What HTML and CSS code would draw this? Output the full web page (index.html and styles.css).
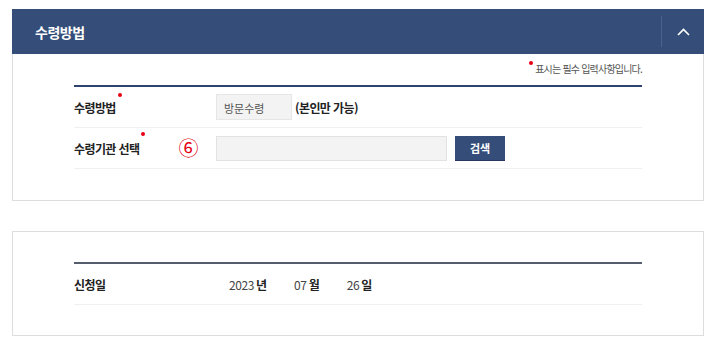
FILE: index.html
```html
<!DOCTYPE html>
<html lang="ko">
  <head>
    <meta charset="UTF-8" />
    <meta name="viewport" content="width=device-width, initial-scale=1.0" />
    <title>수령방법</title>
    <link rel="stylesheet" href="styles.css">
  </head>
  <body>
    <div class="section">
      <div class="section-head">
        <h2 class="section-title">수령방법</h2>
        <button class="toggle" type="button">
          <svg width="13" height="8" viewBox="0 0 13 8">
            <polyline points="1,7 6.5,1.5 12,7" fill="none" stroke="#fff" stroke-width="1.6" />
          </svg>
        </button>
      </div>
      <div class="section-body">
        <p class="req-note"><span class="dot"></span> 표시는 필수 입력사항입니다.</p>
        <div class="form-table">
          <div class="row">
            <div class="label">수령방법<span class="dot"></span></div>
            <div class="value">
              <span class="readonly">방문수령</span>
              <strong class="hint">(본인만 가능)</strong>
            </div>
          </div>
          <div class="row">
            <div class="label">수령기관 선택<span class="dot"></span><span class="marker">⑥</span></div>
            <div class="value">
              <input class="text-input" type="text" />
              <button class="btn-search" type="button">검색</button>
            </div>
          </div>
        </div>
      </div>
    </div>

    <div class="section section-plain">
      <div class="section-body">
        <div class="form-table form-table-gray">
          <div class="row">
            <div class="label">신청일</div>
            <div class="value date">
              <span class="num">2023</span><b>년</b>
              <span class="num">07</span><b>월</b>
              <span class="num">26</span><b>일</b>
            </div>
          </div>
        </div>
      </div>
    </div>
  </body>
</html>
```

FILE: styles.css
```css
* {
  box-sizing: border-box;
  margin: 0;
  padding: 0;
  font-family: "Noto Sans CJK KR", "Noto Sans", sans-serif;
}

body {
  background: #fff;
  color: #333;
  padding: 9px 17px 0 12px;
}

.section {
  width: 692px;
}

.section-head {
  display: flex;
  align-items: center;
  height: 45px;
  background-color: #344e79;
  padding-left: 23px;
}

.section-title {
  flex: 1;
  color: #fff;
  font-size: 14px;
  font-weight: 700;
  letter-spacing: -0.5px;
}

.toggle {
  width: 43px;
  height: 31px;
  border: none;
  border-left: 1px solid #4a6190;
  background: transparent;
  display: flex;
  align-items: center;
  justify-content: center;
}

.section-body {
  border: 1px solid #ddd;
  border-top: none;
  padding: 8px 61px 31px 61px;
}

.section-plain {
  margin-top: 30px;
}

.section-plain .section-body {
  border-top: 1px solid #ddd;
  padding-top: 30px;
  padding-bottom: 30px;
}

.req-note {
  text-align: right;
  font-size: 10px;
  line-height: 14px;
  color: #555;
  letter-spacing: -0.8px;
  margin-bottom: 9px;
}

.dot {
  display: inline-block;
  width: 4px;
  height: 4px;
  border-radius: 50%;
  background: #e60012;
  vertical-align: top;
  position: relative;
  top: -1px;
}

.form-table {
  border-top: 2px solid #2e4370;
}

.form-table-gray {
  border-top-color: #535d6c;
}

.row {
  display: flex;
  align-items: center;
  height: 41px;
  border-bottom: 1px solid #f0f0f0;
}

.label {
  width: 142px;
  display: flex;
  align-items: center;
  font-size: 12px;
  font-weight: 700;
  color: #222;
  letter-spacing: -0.6px;
}

.label .dot {
  align-self: flex-start;
  margin-left: 2px;
  top: -6px;
}

.marker {
  margin-left: auto;
  margin-right: 18px;
  color: #e60012;
  font-size: 20px;
  font-weight: 400;
  line-height: 1;
}

.value {
  display: flex;
  align-items: center;
  flex: 1;
}

.readonly {
  display: inline-block;
  width: 76px;
  height: 26px;
  line-height: 26px;
  padding-left: 7px;
  background: #f3f3f3;
  border: 1px solid #e6e6e6;
  font-size: 11px;
  color: #555;
}

.hint {
  margin-left: 3px;
  font-size: 12px;
  color: #222;
  letter-spacing: -0.6px;
}

.text-input {
  width: 231px;
  height: 25px;
  background: #f3f3f3;
  border: 1px solid #e2e2e2;
}

.btn-search {
  width: 50px;
  height: 25px;
  margin-left: 8px;
  background: #344e79;
  color: #fff;
  border: none;
  border-bottom: 1px solid #26395c;
  font-size: 11px;
  font-weight: 700;
}

.date {
  padding-left: 13px;
  font-size: 12px;
  color: #444;
}

.date .num {
  letter-spacing: -0.4px;
}

.date b {
  margin-left: 2px;
  margin-right: 27px;
  color: #222;
}
```
